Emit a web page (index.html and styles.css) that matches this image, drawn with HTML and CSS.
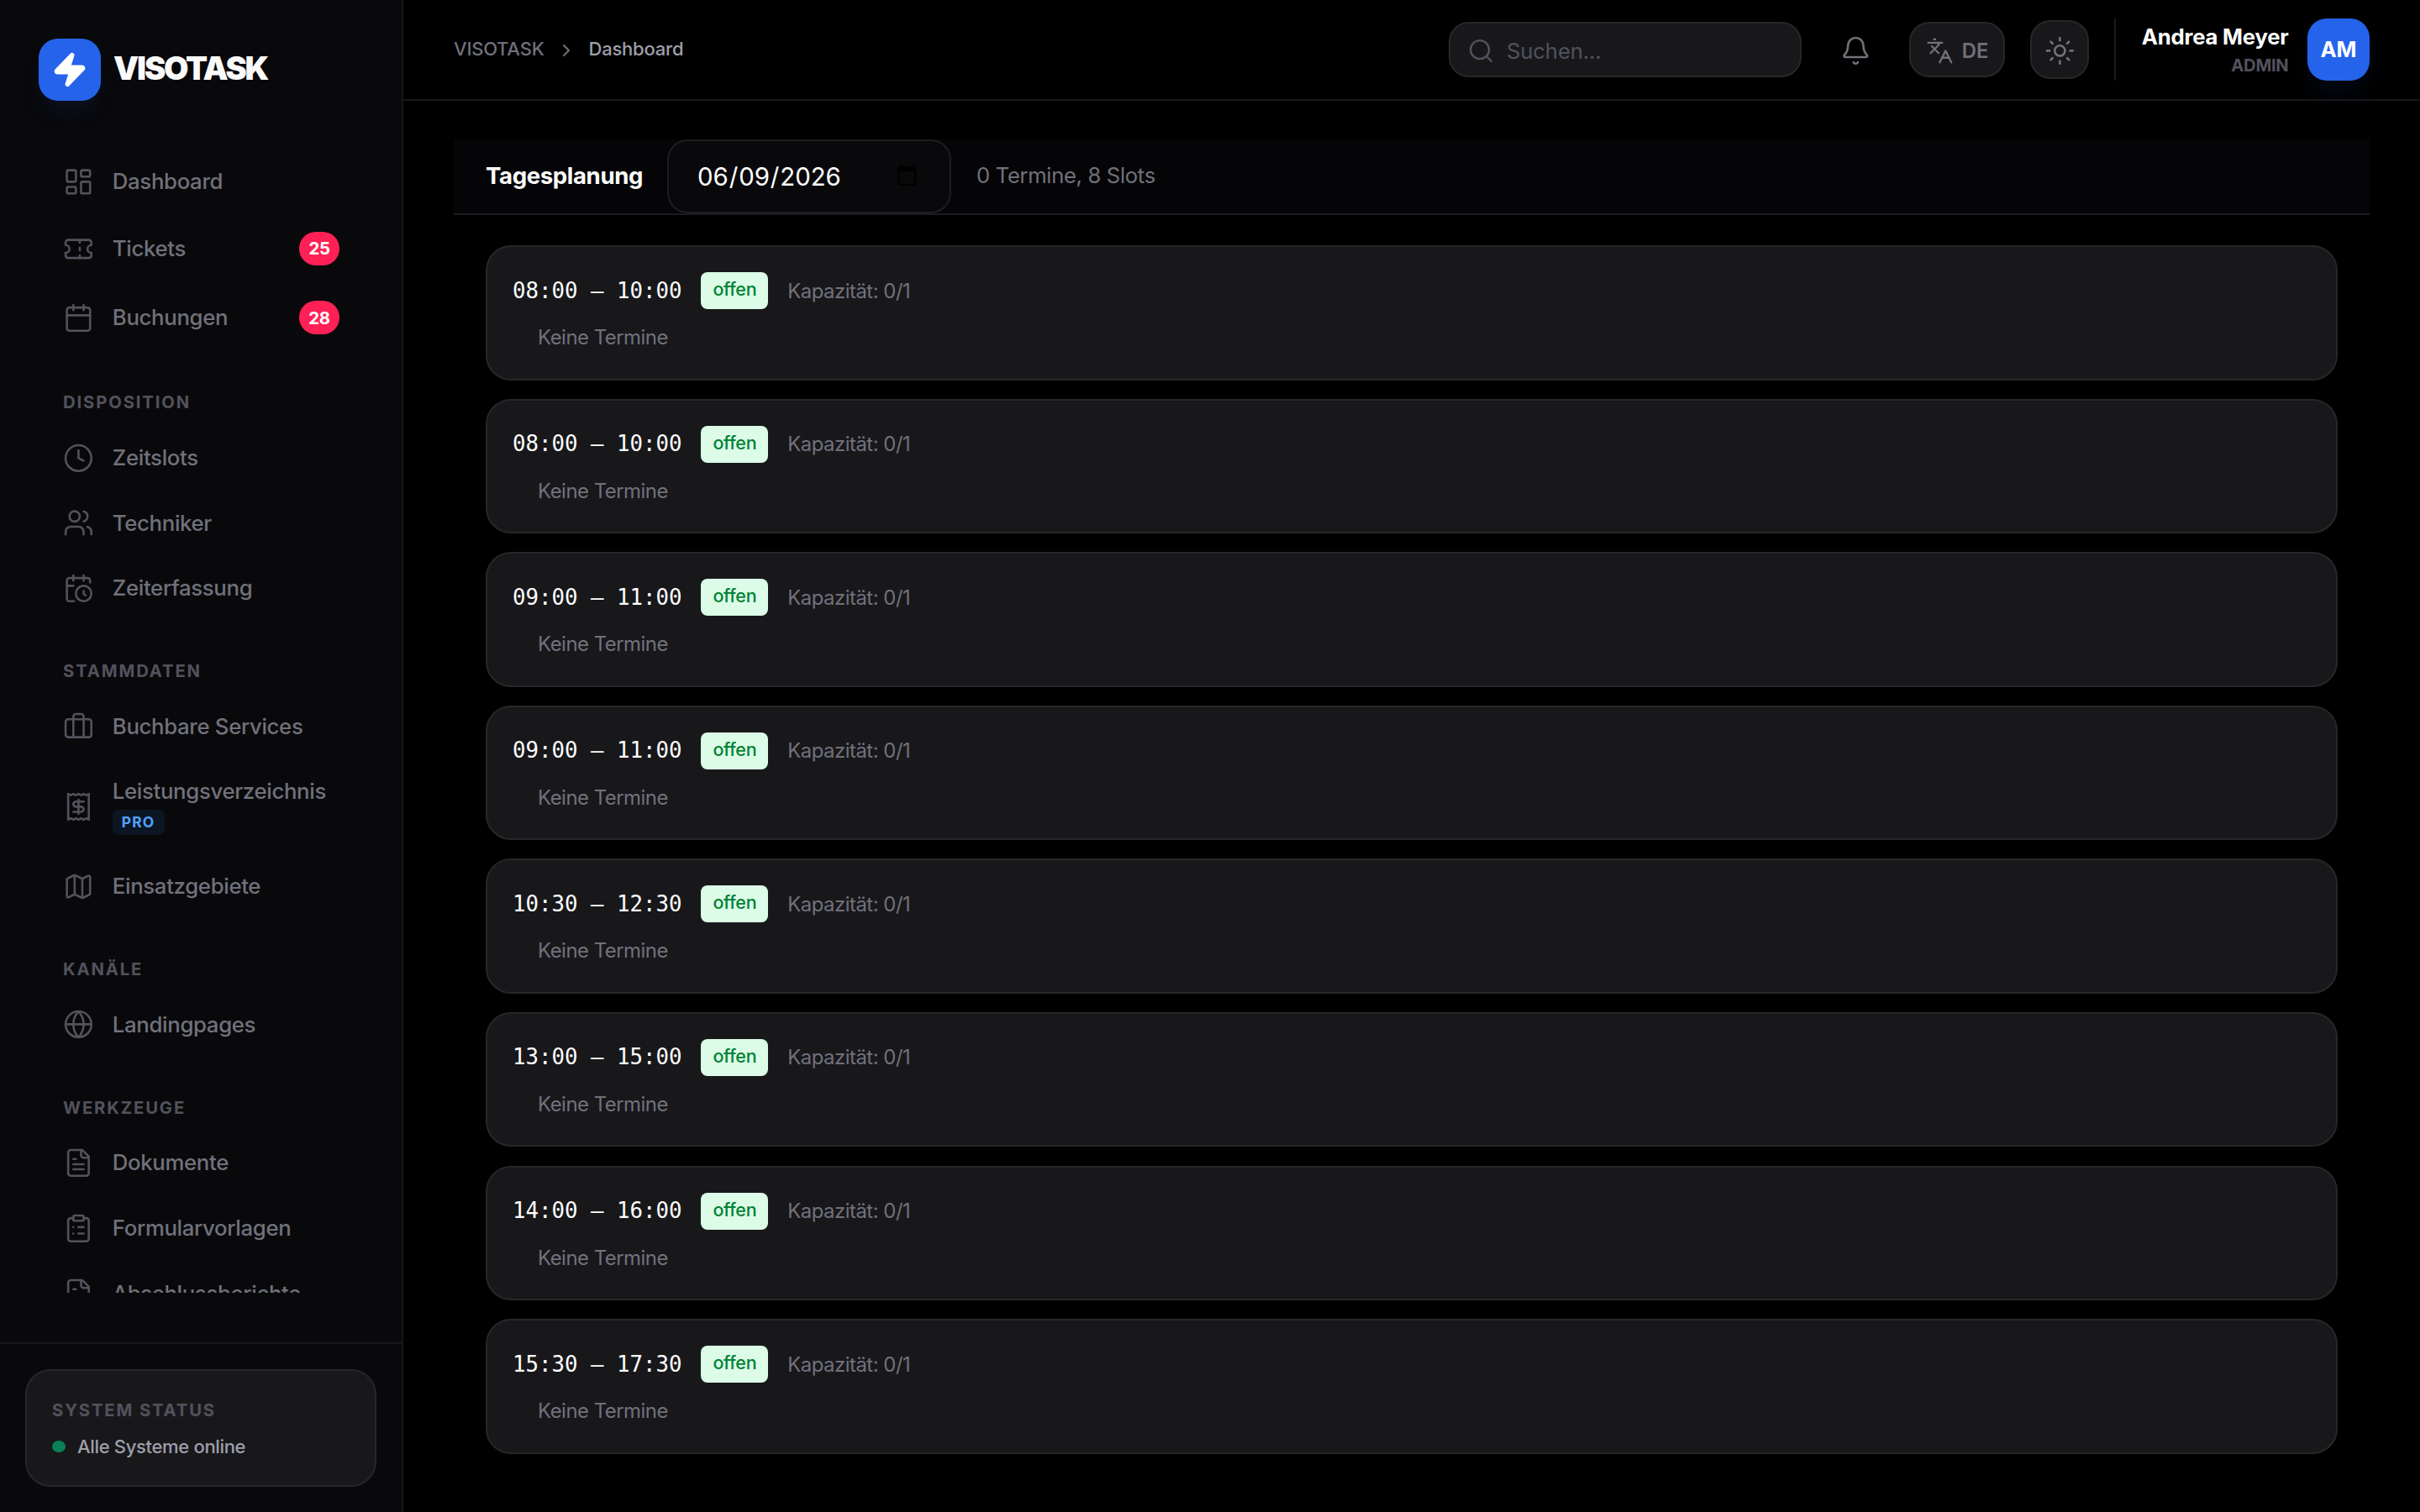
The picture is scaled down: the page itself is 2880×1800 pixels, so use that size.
FILE: index.html
```html
<!DOCTYPE html>
<html lang="de">
<head>
  <meta charset="UTF-8">
  <meta name="viewport" content="width=device-width, initial-scale=1.0">
  <title>VISOTASK Dashboard</title>
  <link rel="stylesheet" href="styles.css">
</head>
<body>
  <div class="app">
    <aside class="sidebar">
      <div class="brand">
        <div class="brand-mark">
          <svg class="bolt" viewBox="0 0 24 24"><path d="M4 14a1 1 0 0 1-.78-1.63l9.9-10.2a.5.5 0 0 1 .86.46l-1.92 6.02A1 1 0 0 0 13 10h7a1 1 0 0 1 .78 1.63l-9.9 10.2a.5.5 0 0 1-.86-.46l1.92-6.02A1 1 0 0 0 11 14z"/></svg>
        </div>
        <span class="brand-name">VISOTASK</span>
      </div>

      <nav class="nav">
        <div class="group">
          <a class="item">
            <svg class="icon" viewBox="0 0 24 24"><rect width="7" height="9" x="3" y="3" rx="1"/><rect width="7" height="5" x="14" y="3" rx="1"/><rect width="7" height="9" x="14" y="12" rx="1"/><rect width="7" height="5" x="3" y="16" rx="1"/></svg>
            <span class="label">Dashboard</span>
          </a>
          <a class="item with-count">
            <svg class="icon" viewBox="0 0 24 24"><path d="M2 9a3 3 0 0 1 0 6v2a2 2 0 0 0 2 2h16a2 2 0 0 0 2-2v-2a3 3 0 0 1 0-6V7a2 2 0 0 0-2-2H4a2 2 0 0 0-2 2Z"/><path d="M13 5v2"/><path d="M13 17v2"/><path d="M13 11v2"/></svg>
            <span class="label">Tickets</span>
            <span class="count">25</span>
          </a>
          <a class="item with-count">
            <svg class="icon" viewBox="0 0 24 24"><path d="M8 2v4"/><path d="M16 2v4"/><rect width="18" height="18" x="3" y="4" rx="2"/><path d="M3 10h18"/></svg>
            <span class="label">Buchungen</span>
            <span class="count">28</span>
          </a>
        </div>

        <h2 class="heading">Disposition</h2>
        <div class="group">
          <a class="item">
            <svg class="icon" viewBox="0 0 24 24"><circle cx="12" cy="12" r="10"/><path d="M12 6v6l4 2"/></svg>
            <span class="label">Zeitslots</span>
          </a>
          <a class="item">
            <svg class="icon" viewBox="0 0 24 24"><path d="M16 21v-2a4 4 0 0 0-4-4H6a4 4 0 0 0-4 4v2"/><circle cx="9" cy="7" r="4"/><path d="M22 21v-2a4 4 0 0 0-3-3.87"/><path d="M16 3.13a4 4 0 0 1 0 7.75"/></svg>
            <span class="label">Techniker</span>
          </a>
          <a class="item">
            <svg class="icon" viewBox="0 0 24 24"><path d="M21 7.5V6a2 2 0 0 0-2-2H5a2 2 0 0 0-2 2v14a2 2 0 0 0 2 2h3.5"/><path d="M16 2v4"/><path d="M8 2v4"/><path d="M3 10h5"/><path d="M17.5 17.5 16 16.3V14"/><circle cx="16" cy="16" r="6"/></svg>
            <span class="label">Zeiterfassung</span>
          </a>
        </div>

        <h2 class="heading">Stammdaten</h2>
        <div class="group">
          <a class="item">
            <svg class="icon" viewBox="0 0 24 24"><path d="M16 20V4a2 2 0 0 0-2-2h-4a2 2 0 0 0-2 2v16"/><rect width="20" height="14" x="2" y="6" rx="2"/></svg>
            <span class="label">Buchbare Services</span>
          </a>
          <a class="item with-tag">
            <svg class="icon" viewBox="0 0 24 24"><path d="M4 2v20l2-1 2 1 2-1 2 1 2-1 2 1 2-1 2 1V2l-2 1-2-1-2 1-2-1-2 1-2-1-2 1Z"/><path d="M16 8h-6a2 2 0 1 0 0 4h4a2 2 0 1 1 0 4H8"/><path d="M12 17.5v-11"/></svg>
            <span class="label">Leistungsverzeichnis<span class="tag">PRO</span></span>
          </a>
          <a class="item">
            <svg class="icon" viewBox="0 0 24 24"><path d="M14.106 5.553a2 2 0 0 0 1.788 0l3.659-1.83A1 1 0 0 1 21 4.619v12.764a1 1 0 0 1-.553.894l-4.553 2.277a2 2 0 0 1-1.788 0l-4.212-2.106a2 2 0 0 0-1.788 0l-3.659 1.83A1 1 0 0 1 3 19.381V6.618a1 1 0 0 1 .553-.894l4.553-2.277a2 2 0 0 1 1.788 0z"/><path d="M15 5.764v15"/><path d="M9 3.236v15"/></svg>
            <span class="label">Einsatzgebiete</span>
          </a>
        </div>

        <h2 class="heading">Kanäle</h2>
        <div class="group">
          <a class="item">
            <svg class="icon" viewBox="0 0 24 24"><circle cx="12" cy="12" r="10"/><path d="M12 2a14.5 14.5 0 0 0 0 20 14.5 14.5 0 0 0 0-20"/><path d="M2 12h20"/></svg>
            <span class="label">Landingpages</span>
          </a>
        </div>

        <h2 class="heading">Werkzeuge</h2>
        <div class="group">
          <a class="item">
            <svg class="icon" viewBox="0 0 24 24"><path d="M15 2H6a2 2 0 0 0-2 2v16a2 2 0 0 0 2 2h12a2 2 0 0 0 2-2V7Z"/><path d="M14 2v4a2 2 0 0 0 2 2h4"/><path d="M10 9H8"/><path d="M16 13H8"/><path d="M16 17H8"/></svg>
            <span class="label">Dokumente</span>
          </a>
          <a class="item">
            <svg class="icon" viewBox="0 0 24 24"><rect width="8" height="4" x="8" y="2" rx="1"/><path d="M16 4h2a2 2 0 0 1 2 2v14a2 2 0 0 1-2 2H6a2 2 0 0 1-2-2V6a2 2 0 0 1 2-2h2"/><path d="M12 11h4"/><path d="M12 16h4"/><path d="M8 11h.01"/><path d="M8 16h.01"/></svg>
            <span class="label">Formularvorlagen</span>
          </a>
          <a class="item">
            <svg class="icon" viewBox="0 0 24 24"><path d="M15 2H6a2 2 0 0 0-2 2v16a2 2 0 0 0 2 2h12a2 2 0 0 0 2-2V7Z"/><path d="M14 2v4a2 2 0 0 0 2 2h4"/><path d="M10 9H8"/><path d="M16 13H8"/><path d="M16 17H8"/></svg>
            <span class="label">Abschlussberichte</span>
          </a>
        </div>
      </nav>

      <div class="sidebar-foot">
        <div class="status">
          <div class="status-title">System Status</div>
          <div class="status-line"><span class="dot"></span>Alle Systeme online</div>
        </div>
      </div>
    </aside>

    <div class="main">
      <header class="topbar">
        <div class="crumbs">
          <span class="crumb">VISOTASK</span>
          <svg class="chevron" viewBox="0 0 24 24"><path d="m9 18 6-6-6-6"/></svg>
          <span class="crumb current">Dashboard</span>
        </div>
        <div class="tools">
          <div class="search">
            <svg class="icon-sm" viewBox="0 0 24 24"><circle cx="11" cy="11" r="8"/><path d="m21 21-4.3-4.3"/></svg>
            <span>Suchen...</span>
          </div>
          <svg class="bell" viewBox="0 0 24 24"><path d="M10.268 21a2 2 0 0 0 3.464 0"/><path d="M3.262 15.326A1 1 0 0 0 4 17h16a1 1 0 0 0 .74-1.673C19.41 13.956 18 12.499 18 8A6 6 0 0 0 6 8c0 4.499-1.411 5.956-2.738 7.326"/></svg>
          <button class="btn lang">
            <svg class="icon-sm" viewBox="0 0 24 24"><path d="m5 8 6 6"/><path d="m4 14 6-6 2-3"/><path d="M2 5h12"/><path d="M7 2h1"/><path d="m22 22-5-10-5 10"/><path d="M14 18h6"/></svg>
            <span>DE</span>
          </button>
          <button class="btn theme">
            <svg class="icon" viewBox="0 0 24 24"><circle cx="12" cy="12" r="4"/><path d="M12 2v2"/><path d="M12 20v2"/><path d="m4.93 4.93 1.41 1.41"/><path d="m17.66 17.66 1.41 1.41"/><path d="M2 12h2"/><path d="M20 12h2"/><path d="m6.34 17.66-1.41 1.41"/><path d="m19.07 4.93-1.41 1.41"/></svg>
          </button>
          <div class="user">
            <div class="user-info">
              <span class="user-name">Andrea Meyer</span>
              <span class="user-role">ADMIN</span>
            </div>
            <div class="avatar">AM</div>
          </div>
        </div>
      </header>

      <main class="content">
        <div class="planbar">
          <h1 class="plan-title">Tagesplanung</h1>
          <input class="plan-date" type="date" value="2026-06-09">
          <span class="plan-info">0 Termine, 8 Slots</span>
        </div>
        <div class="slots">
          <section class="slot">
            <div class="slot-head"><span class="time">08:00 – 10:00</span><span class="state">offen</span><span class="capacity">Kapazität: 0/1</span></div>
            <p class="empty">Keine Termine</p>
          </section>
          <section class="slot">
            <div class="slot-head"><span class="time">08:00 – 10:00</span><span class="state">offen</span><span class="capacity">Kapazität: 0/1</span></div>
            <p class="empty">Keine Termine</p>
          </section>
          <section class="slot">
            <div class="slot-head"><span class="time">09:00 – 11:00</span><span class="state">offen</span><span class="capacity">Kapazität: 0/1</span></div>
            <p class="empty">Keine Termine</p>
          </section>
          <section class="slot">
            <div class="slot-head"><span class="time">09:00 – 11:00</span><span class="state">offen</span><span class="capacity">Kapazität: 0/1</span></div>
            <p class="empty">Keine Termine</p>
          </section>
          <section class="slot">
            <div class="slot-head"><span class="time">10:30 – 12:30</span><span class="state">offen</span><span class="capacity">Kapazität: 0/1</span></div>
            <p class="empty">Keine Termine</p>
          </section>
          <section class="slot">
            <div class="slot-head"><span class="time">13:00 – 15:00</span><span class="state">offen</span><span class="capacity">Kapazität: 0/1</span></div>
            <p class="empty">Keine Termine</p>
          </section>
          <section class="slot">
            <div class="slot-head"><span class="time">14:00 – 16:00</span><span class="state">offen</span><span class="capacity">Kapazität: 0/1</span></div>
            <p class="empty">Keine Termine</p>
          </section>
          <section class="slot">
            <div class="slot-head"><span class="time">15:30 – 17:30</span><span class="state">offen</span><span class="capacity">Kapazität: 0/1</span></div>
            <p class="empty">Keine Termine</p>
          </section>
        </div>
      </main>
    </div>
  </div>
</body>
</html>
```
FILE: styles.css
```css
* {
  box-sizing: border-box;
}
body {
  margin: 0;
  background: #000;
  color: #fff;
  font-family: Inter, "Liberation Sans", sans-serif;
  font-size: 25.76px;
}
h1, h2, p {
  margin: 0;
}
svg {
  fill: none;
  stroke: currentColor;
  stroke-width: 1.7;
  stroke-linecap: round;
  stroke-linejoin: round;
  flex-shrink: 0;
}
.app {
  display: flex;
  width: 2880px;
  height: 1800px;
  overflow: hidden;
}

/* sidebar */
.sidebar {
  display: flex;
  flex-direction: column;
  width: 480px;
  flex-shrink: 0;
  background: #09090b;
  border-right: 2px solid #18181b;
}
.brand {
  display: flex;
  align-items: center;
  gap: 15px;
  padding: 46px 46px 59px;
}
.brand-mark {
  display: flex;
  align-items: center;
  justify-content: center;
  width: 74px;
  height: 74px;
  border-radius: 23px;
  background: #2563eb;
  box-shadow: 0 18px 28px -6px rgba(37, 99, 235, 0.1);
}
.bolt {
  width: 44px;
  height: 44px;
  fill: #fff;
  stroke: #fff;
  stroke-width: 2;
}
.brand-name {
  margin-bottom: 5px;
  font-size: 38px;
  font-weight: 900;
  letter-spacing: -0.057em;
  color: #fafafa;
}
.nav {
  height: 1360px;
  padding: 0 45px 0 46px;
  overflow: hidden;
}
.group {
  display: flex;
  flex-direction: column;
  gap: 3.7px;
}
.item {
  display: flex;
  align-items: center;
  height: 74px;
  padding: 0 29px;
  gap: 22px;
  color: #71717b;
  font-weight: 500;
  letter-spacing: -0.33px;
}
.with-count {
  height: 78.5px;
}
.with-tag {
  height: 108.6px;
}
.icon {
  width: 36.8px;
  height: 36.8px;
  color: #52525c;
}
.label {
  flex: 1;
  line-height: 32px;
}
.count {
  display: flex;
  align-items: center;
  justify-content: center;
  width: 48px;
  height: 40px;
  border-radius: 20px;
  background: #ff2056;
  color: #fff;
  font-size: 20.24px;
  font-weight: 700;
}
.tag {
  display: block;
  width: 62px;
  height: 30px;
  margin-top: 6px;
  padding-left: 11px;
  border-radius: 7px;
  background: rgba(43, 127, 255, 0.1);
  color: #51a2ff;
  font-size: 17.4px;
  font-weight: 700;
  line-height: 30px;
  letter-spacing: 1.1px;
}
.heading {
  padding: 50px 29px 16.7px;
  color: #52525c;
  font-size: 20.24px;
  font-weight: 700;
  line-height: 24px;
  letter-spacing: 1.88px;
  text-transform: uppercase;
}
.sidebar-foot {
  margin-top: auto;
  height: 202px;
  padding: 30px;
  border-top: 2px solid #18181b;
}
.status {
  height: 140px;
  padding: 34px 30px 0;
  border: 2px solid #27272a;
  border-radius: 30px;
  background: #18181b;
}
.status-title {
  color: #52525c;
  font-size: 20.24px;
  font-weight: 700;
  line-height: 25px;
  letter-spacing: 1.88px;
  text-transform: uppercase;
}
.status-line {
  display: flex;
  align-items: center;
  gap: 14px;
  height: 30px;
  margin-top: 16px;
  color: #9f9fa9;
  font-size: 22px;
  font-weight: 500;
  letter-spacing: -0.33px;
}
.dot {
  width: 16px;
  height: 14px;
  border-radius: 50%;
  background: #0a8057;
}

/* top bar */
.main {
  flex: 1;
}
.topbar {
  display: flex;
  align-items: center;
  justify-content: space-between;
  height: 120px;
  padding: 0 60px;
  border-bottom: 2px solid #18181b;
}
.crumbs {
  display: flex;
  align-items: center;
  gap: 14.5px;
  color: #71717b;
  font-size: 22px;
  font-weight: 500;
  letter-spacing: -0.22px;
}
.crumb {
  padding-bottom: 2px;
}
.chevron {
  width: 24px;
  height: 24px;
  margin-top: 2px;
  stroke-width: 2;
}
.current {
  color: #9f9fa9;
}
.tools {
  display: flex;
  align-items: center;
}
.search {
  display: flex;
  align-items: center;
  gap: 14.5px;
  width: 420px;
  height: 66px;
  padding: 2px 19.5px 0;
  border: 2px solid #27272a;
  border-radius: 24px;
  background: #18181b;
  color: #52525c;
  letter-spacing: -0.2px;
}
.icon-sm {
  width: 33px;
  height: 33px;
}
.bell {
  width: 36.8px;
  height: 36.8px;
  margin: 2px 45.6px 0;
  color: #71717b;
}
.btn {
  display: flex;
  align-items: center;
  justify-content: center;
  padding: 2px 0 0;
  border: 2px solid #27272a;
  border-radius: 24px;
  background: #18181b;
  color: #71717b;
  font-family: inherit;
}
.lang {
  width: 114px;
  height: 66px;
  gap: 10px;
  font-size: 23.9px;
  font-weight: 600;
}
.theme {
  width: 70px;
  height: 70px;
  margin: 0 30px;
}
.theme .icon {
  color: #71717b;
}
.user {
  display: flex;
  align-items: center;
  justify-content: flex-end;
  gap: 22.5px;
  width: 304px;
  height: 74px;
  border-left: 2px solid #18181b;
}
.user-info {
  display: flex;
  flex-direction: column;
  align-items: flex-end;
  gap: 6px;
  padding-bottom: 1px;
}
.user-name {
  font-weight: 700;
  letter-spacing: -0.25px;
}
.user-role {
  color: #52525c;
  font-size: 20.24px;
  font-weight: 700;
  letter-spacing: -0.3px;
}
.avatar {
  display: flex;
  align-items: center;
  justify-content: center;
  width: 74px;
  height: 74px;
  padding-bottom: 1px;
  border-radius: 23px;
  background: #2563eb;
  font-weight: 700;
  letter-spacing: -0.2px;
  box-shadow: 0 18px 28px -6px rgba(37, 99, 235, 0.1);
}

/* day plan */
.content {
  padding: 46px 60px;
}
.planbar {
  display: flex;
  align-items: center;
  height: 90px;
  padding-left: 38px;
  border-bottom: 2px solid #1c1c1f;
  background: #050507;
}
.plan-title {
  width: 186px;
  padding-bottom: 3px;
  font-size: 27.6px;
  font-weight: 700;
  letter-spacing: -0.38px;
}
.plan-date {
  width: 338px;
  height: 88px;
  margin: 0 30px;
  padding: 0 34px 1px 33px;
  border: 2px solid #1e1e21;
  border-radius: 24px;
  background: #09090b;
  color: #fff;
  font-family: inherit;
  font-size: 29.44px;
  letter-spacing: -0.1px;
}
.plan-info {
  padding-bottom: 3px;
  color: #71717b;
  letter-spacing: -0.4px;
}
.slots {
  display: flex;
  flex-direction: column;
  gap: 22.1px;
  padding: 36px 38px;
}
.slot {
  height: 160.5px;
  padding: 30px;
  border: 2px solid #27272a;
  border-radius: 30px;
  background: #18181b;
}
.slot-head {
  display: flex;
  align-items: center;
  gap: 22.8px;
  height: 44px;
}
.time {
  padding-bottom: 1px;
  font-family: "DejaVu Sans Mono", monospace;
}
.state {
  width: 80px;
  height: 44px;
  border-radius: 8px;
  background: #dcfce7;
  color: #008236;
  font-size: 21.5px;
  font-weight: 500;
  line-height: 40px;
  letter-spacing: -0.3px;
  text-align: center;
}
.capacity, .empty {
  color: #71717b;
  font-size: 23.9px;
  letter-spacing: -0.48px;
}
.empty {
  padding: 19px 30px 0;
}
```
